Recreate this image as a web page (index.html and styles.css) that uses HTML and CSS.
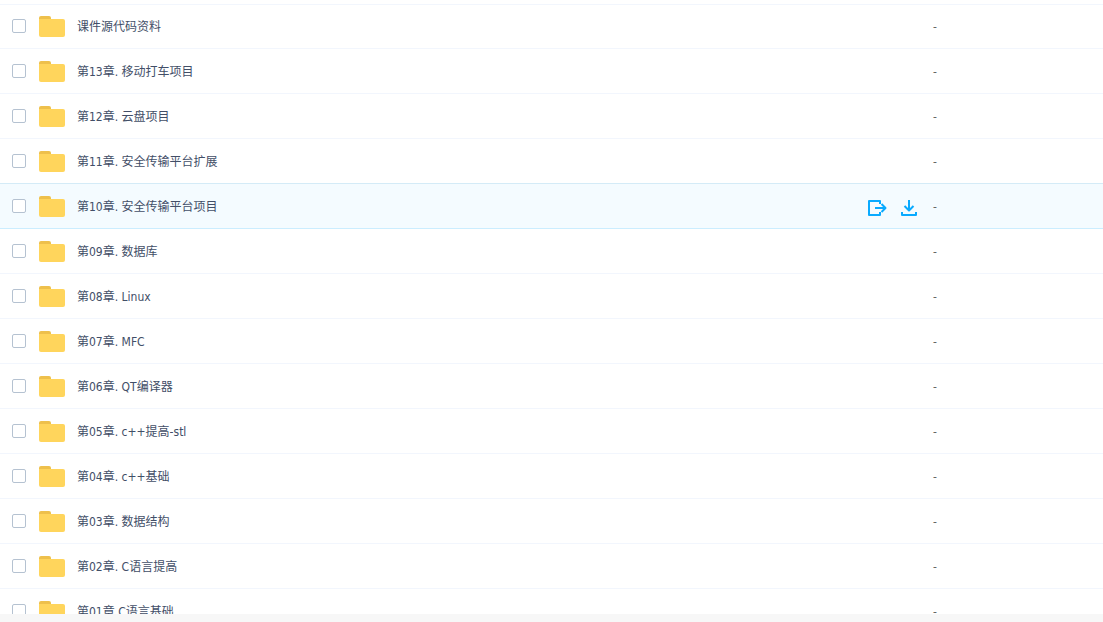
FILE: index.html
```html
<!DOCTYPE html>
<html lang="zh-CN">
<head>
    <meta charset="UTF-8">
    <meta name="viewport" content="width=device-width, initial-scale=1.0">
    <title>文件列表</title>
    <link rel="stylesheet" href="styles.css">
</head>
<body>
    <svg class="sprite" aria-hidden="true">
        <symbol id="folder" viewBox="0 0 26 22">
            <path fill="#eec04c" d="M0 6V2a2 2 0 0 1 2-2h8a2 2 0 0 1 2 2v4z"/>
            <path fill="#ffd55c" d="M0 3h24a2 2 0 0 1 2 2v14a2 2 0 0 1-2 2H2a2 2 0 0 1-2-2z"/>
        </symbol>
    </svg>
    <main class="file-list">
        <table class="file-table">
            <tbody id="files"></tbody>
        </table>
    </main>
    <footer class="bottom-bar"></footer>

    <script>
        const files = [
            '课件源代码资料',
            '第13章. 移动打车项目',
            '第12章. 云盘项目',
            '第11章. 安全传输平台扩展',
            '第10章. 安全传输平台项目',
            '第09章. 数据库',
            '第08章. Linux',
            '第07章. MFC',
            '第06章. QT编译器',
            '第05章. c++提高-stl',
            '第04章. c++基础',
            '第03章. 数据结构',
            '第02章. C语言提高',
            '第01章 C语言基础'
        ];
        const activeIndex = 4;

        const actions = `
            <button class="action" type="button" aria-label="保存">
                <svg viewBox="0 1 20 20"><path d="M13 8V5H2v14h11v-3M8 12h10M14.500 8l4 4-4 4"/></svg>
            </button>
            <button class="action" type="button" aria-label="下载">
                <svg viewBox="0 1 20 20"><path d="M10 4v10M5.500 10l4.500 4.500 4.500-4.500M3 16v3h14v-3"/></svg>
            </button>`;

        document.getElementById('files').innerHTML = files.map((name, index) => `
            <tr class="${index === activeIndex ? 'file active' : 'file'}">
                <td class="check-cell"><input class="check" type="checkbox" id="file${index}"></td>
                <td class="name-cell">
                    <div class="name-row">
                        <svg class="folder"><use href="#folder"/></svg>
                        <label class="name" for="file${index}">${name}</label>
                        ${index === activeIndex ? actions : ''}
                    </div>
                </td>
                <td class="size-cell">-</td>
            </tr>`).join('');
    </script>
</body>
</html>
```
FILE: styles.css
```css
* {
    box-sizing: border-box;
}
body {
    display: flex;
    flex-direction: column;
    height: 100vh;
    margin: 0;
    background-color: white;
    color: #424e67;
    font-family: Tahoma, "DejaVu Sans Condensed", "Noto Sans CJK SC", sans-serif;
    font-size: 12px;
    line-height: 18px;
}
.sprite {
    display: none;
}
.file-list {
    flex: 1;
    min-height: 0;
    padding-top: 4px;
    overflow: hidden;
}
.file-table {
    width: 100%;
    border-spacing: 0;
    table-layout: fixed;
}
.file td {
    height: 45px;
    padding: 0;
    border-bottom: 1px solid #f2f6fd;
}
.file:first-child td {
    box-shadow: inset 0 1px #f2f6fd;
}
.file.active td {
    background-color: #f4fbff;
    border-bottom-color: #cbedff;
}
/* the line above the active row */
.file:has(+ .active) td {
    border-bottom-color: #d4ebf7;
}
.file .check-cell {
    width: 39px;
    padding-left: 12px;
}
.file .name-cell,
.file .size-cell {
    padding-top: 2px;
}
.file .size-cell {
    width: 170px;
    color: #666;
}
.check {
    display: block;
    width: 14px;
    height: 14px;
    margin: 0;
    appearance: none;
    background-color: white;
    border: 1px solid #b5c2d1;
    border-radius: 2px;
}
.check:checked {
    background-color: #09aaff;
}
.name-row {
    display: flex;
    align-items: center;
    gap: 12px;
    padding-right: 14px;
}
.folder {
    width: 26px;
    height: 22px;
}
.name {
    flex: 1;
}
.action {
    width: 20px;
    height: 20px;
    padding: 0;
    background: none;
    border: none;
    cursor: pointer;
}
.action svg {
    display: block;
    width: 20px;
    height: 20px;
    fill: none;
    stroke: #09aaff;
    stroke-width: 2;
    stroke-linejoin: round;
}
/* overflow keeps the lower edge of the icons */
.action svg {
    overflow: visible;
}
.bottom-bar {
    height: 8px;
    background-color: #f7f7f7;
}
```
